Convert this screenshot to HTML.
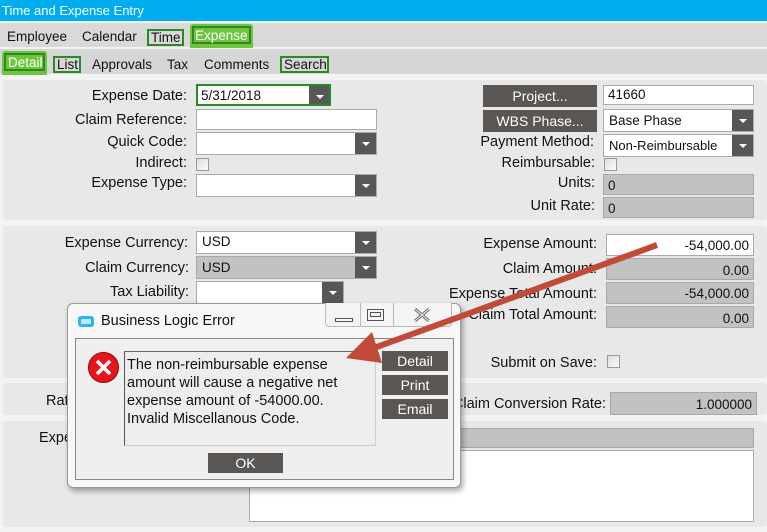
<!DOCTYPE html>
<html><head><meta charset="utf-8"><style>
*{box-sizing:border-box;margin:0;padding:0}
body{width:767px;height:532px;position:relative;overflow:hidden;background:#f3f3f3;font-family:"Liberation Sans",Arial,sans-serif;font-size:14.5px;color:#111}
.a{position:absolute;white-space:nowrap}
.t{font-size:13.5px}
.lbl{position:absolute;text-align:right;white-space:nowrap;margin-top:1px}
.in{position:absolute;background:#fff;border:1px solid #aaa;font-size:13.5px}
.gr{position:absolute;background:#c2c2c2;border:1px solid #a8a8a8;padding:0 6px;line-height:19px;white-space:nowrap;font-size:13.5px}
.dd{position:absolute;right:0;top:0;bottom:0;width:21px;background:#575757}
.dd:after{content:"";position:absolute;left:7px;top:9px;border-left:4px solid transparent;border-right:4px solid transparent;border-top:4px solid #fff}
.btn{position:absolute;background:#595653;color:#fff;text-align:center;font-size:14px}
.panel{position:absolute;left:3px;right:0;background:#e8e8e8;border-radius:3px}
.cb{position:absolute;width:13px;height:13px;border:1px solid #999;background:linear-gradient(135deg,#ddd,#fafafa)}
.box{position:absolute;border:2px solid #2a8a2a}
</style></head><body>
<div class="a" style="left:0;top:0;width:767px;height:21px;background:#00adef;color:#fff;padding:3px 0 0 2px;font-size:13px">Time and Expense Entry</div>
<div class="a" style="left:0;top:23px;width:767px;height:24px;background:#d9d9d9"></div>
<div class="a t" style="left:7px;top:29px">Employee</div>
<div class="a t" style="left:82px;top:29px">Calendar</div>
<div class="box" style="left:147px;top:29px;width:37px;height:17px"></div>
<div class="a t" style="left:151px;top:30px">Time</div>
<div class="a" style="left:190px;top:24px;width:63px;height:24px;background:#6ec53a;border-radius:3px 3px 0 0"></div>
<div class="box" style="left:192px;top:26px;width:59px;height:18px"></div>
<div class="a t" style="left:195px;top:28px;color:#fff">Expense</div>
<div class="a" style="left:0;top:49px;width:767px;height:25px;background:#d6d6d6"></div>
<div class="a" style="left:2px;top:51px;width:45px;height:24px;background:#6ec53a;border-radius:3px 3px 0 0"></div>
<div class="box" style="left:4px;top:53px;width:41px;height:18px"></div>
<div class="a t" style="left:8px;top:55px;color:#fff">Detail</div>
<div class="box" style="left:53px;top:56px;width:28px;height:17px"></div>
<div class="a t" style="left:57px;top:57px">List</div>
<div class="a t" style="left:92px;top:57px">Approvals</div>
<div class="a t" style="left:167px;top:57px">Tax</div>
<div class="a t" style="left:204px;top:57px">Comments</div>
<div class="box" style="left:280px;top:56px;width:49px;height:17px"></div>
<div class="a t" style="left:284px;top:57px">Search</div>

<div class="panel" style="top:80px;height:140px"></div>
<div class="panel" style="top:226px;height:152px"></div>
<div class="panel" style="top:383px;height:32px"></div>
<div class="panel" style="top:421px;height:106px"></div>

<div class="lbl" style="right:580px;top:87px">Expense Date:</div>
<div class="in" style="left:196px;top:84px;width:135px;height:22px;border:2px solid #2a8a2a;padding:2px 3px">5/31/2018<div class="dd" style="width:20px"></div></div>
<div class="lbl" style="right:580px;top:111px">Claim Reference:</div>
<div class="in" style="left:196px;top:109px;width:181px;height:21px"></div>
<div class="lbl" style="right:580px;top:133px">Quick Code:</div>
<div class="in" style="left:196px;top:132px;width:181px;height:23px"><div class="dd"></div></div>
<div class="lbl" style="right:580px;top:154px">Indirect:</div>
<div class="cb" style="left:196px;top:158px"></div>
<div class="lbl" style="right:580px;top:174px">Expense Type:</div>
<div class="in" style="left:196px;top:174px;width:181px;height:23px"><div class="dd"></div></div>

<div class="btn" style="left:483px;top:85px;width:114px;height:22px;line-height:22px">Project...</div>
<div class="in" style="left:603px;top:85px;width:151px;height:20px;padding:1px 4px">41660</div>
<div class="btn" style="left:483px;top:110px;width:114px;height:22px;line-height:22px">WBS Phase...</div>
<div class="in" style="left:603px;top:109px;width:151px;height:23px;padding:3px 5px">Base Phase<div class="dd"></div></div>
<div class="lbl" style="right:173px;top:133px">Payment Method:</div>
<div class="in" style="left:603px;top:134px;width:151px;height:23px;padding:3px 5px;font-size:13px">Non-Reimbursable<div class="dd"></div></div>
<div class="lbl" style="right:172px;top:154px">Reimbursable:</div>
<div class="cb" style="left:604px;top:158px"></div>
<div class="lbl" style="right:172px;top:174px">Units:</div>
<div class="gr" style="left:603px;top:174px;width:151px;height:21px;padding:1px 4px">0</div>
<div class="lbl" style="right:172px;top:197px">Unit Rate:</div>
<div class="gr" style="left:603px;top:197px;width:151px;height:21px;padding:1px 4px">0</div>

<div class="lbl" style="right:579px;top:234px">Expense Currency:</div>
<div class="in" style="left:196px;top:231px;width:181px;height:23px;padding:2px 5px">USD<div class="dd"></div></div>
<div class="lbl" style="right:578px;top:259px">Claim Currency:</div>
<div class="gr" style="left:196px;top:256px;width:181px;height:23px;padding:1px 5px">USD<div class="dd"></div></div>
<div class="lbl" style="right:578px;top:283px">Tax Liability:</div>
<div class="in" style="left:196px;top:281px;width:148px;height:23px"><div class="dd"></div></div>

<div class="lbl" style="right:170px;top:235px">Expense Amount:</div>
<div class="in" style="left:606px;top:234px;width:148px;height:22px;text-align:right;padding:3px 4px">-54,000.00</div>
<div class="lbl" style="right:170px;top:260px">Claim Amount:</div>
<div class="gr" style="left:606px;top:258px;width:148px;height:22px;text-align:right;padding:2px 4px">0.00</div>
<div class="lbl" style="right:170px;top:285px">Expense Total Amount:</div>
<div class="gr" style="left:606px;top:282px;width:148px;height:22px;text-align:right;padding:1px 4px">-54,000.00</div>
<div class="lbl" style="right:170px;top:306px">Claim Total Amount:</div>
<div class="gr" style="left:606px;top:306px;width:148px;height:22px;text-align:right;padding:2px 4px">0.00</div>
<div class="lbl" style="right:170px;top:354px">Submit on Save:</div>
<div class="cb" style="left:607px;top:355px"></div>
<div class="lbl" style="left:46px;top:392px">Rate:</div>
<div class="lbl" style="right:161px;top:395px">Claim Conversion Rate:</div>
<div class="gr" style="left:610px;top:392px;width:147px;height:23px;text-align:right;padding:2px 4px">1.000000</div>
<div class="lbl" style="left:39px;top:429px">Expense:</div>
<div class="gr" style="left:410px;top:428px;width:344px;height:20px"></div>
<div class="in" style="left:249px;top:450px;width:505px;height:72px"></div>

<div class="a" style="left:67px;top:303px;width:394px;height:185px;background:#f7f7f7;border:1px solid #9a9a9a;border-radius:6px;box-shadow:2px 3px 6px rgba(0,0,0,.35)"></div>
<div class="a" style="left:78px;top:316px;width:16px;height:11px;background:#2ab8ea;border-radius:3px"><div style="margin:3px;height:5px;background:#bfe8f8;border-radius:1px"></div></div>
<div class="a" style="left:101px;top:313px;font-size:14.5px">Business Logic Error</div>
<div class="a" style="left:325px;top:303px;width:127px;height:24px;border:1px solid #bbb;border-top:none;border-radius:0 0 4px 4px;background:#f4f4f4"></div>
<div class="a" style="left:360px;top:303px;width:1px;height:24px;background:#bbb"></div>
<div class="a" style="left:393px;top:303px;width:1px;height:24px;background:#bbb"></div>
<div class="a" style="left:335px;top:318px;width:18px;height:4px;border:1px solid #555"></div>
<div class="a" style="left:367px;top:309px;width:17px;height:12px;border:1px solid #555"><div style="margin:2px;height:5px;border:1px solid #555"></div></div>
<svg class="a" style="left:414px;top:308px" width="16" height="14"><path d="M1 1L15 13M15 1L1 13" stroke="#666" stroke-width="3"/><path d="M1 1L15 13M15 1L1 13" stroke="#f4f4f4" stroke-width="1"/></svg>
<div class="a" style="left:75px;top:338px;width:379px;height:142px;background:#efefef;border:1px solid #888"></div>
<div class="a" style="left:124px;top:351px;width:252px;height:95px;background:#ededed;border:1px solid #ccc;border-left:1px solid #555;border-top:1px solid #666;padding:4px 28px 3px 2px;font-size:14.5px;line-height:18px;white-space:normal">The non-reimbursable expense amount will cause a negative net expense amount of -54000.00. Invalid Miscellanous Code.</div>
<svg class="a" style="left:87px;top:351px" width="34" height="34"><circle cx="16.5" cy="16.5" r="15" fill="#e8141c" stroke="#8a0a0a" stroke-width="1"/><path d="M10 10L23 23M23 10L10 23" stroke="#fff" stroke-width="3.5"/></svg>
<div class="btn" style="left:382px;top:351px;width:66px;height:20px;line-height:20px">Detail</div>
<div class="btn" style="left:382px;top:375px;width:66px;height:20px;line-height:20px">Print</div>
<div class="btn" style="left:382px;top:399px;width:66px;height:20px;line-height:20px">Email</div>
<div class="btn" style="left:208px;top:453px;width:75px;height:20px;line-height:20px">OK</div>

<svg class="a" style="left:0;top:0" width="767" height="532"><path d="M657 245L352 356" stroke="#c24a38" stroke-width="6" fill="none"/><path d="M346 358L372 332L382 363Z" fill="#c24a38"/></svg>
</body></html>
